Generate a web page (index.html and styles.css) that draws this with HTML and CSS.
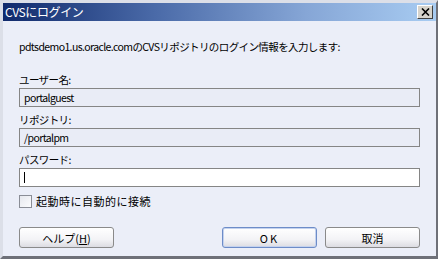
FILE: index.html
```html
<!DOCTYPE html>
<html lang="ja">
<head>
    <meta charset="UTF-8">
    <title>CVSにログイン</title>
    <link rel="stylesheet" href="styles.css">
</head>
<body>
    <div class="window">
        <div class="titlebar">
            <span class="title">CVSにログイン</span>
            <span class="close">
                <svg width="9" height="8" viewBox="0 0 9 8"><path d="M1 0.5 L8 7.5 M8 0.5 L1 7.5" stroke="#000" stroke-width="1.6"/></svg>
            </span>
        </div>
        <div class="content">
            <p class="intro">pdtsdemo1.us.oracle.comのCVSリポジトリのログイン情報を入力します:</p>

            <div class="group">
                <label class="label">ユーザー名:</label>
                <div class="field readonly">portalguest</div>
            </div>
            <div class="group">
                <label class="label">リポジトリ:</label>
                <div class="field readonly">/portalpm</div>
            </div>
            <div class="group">
                <label class="label">パスワード:</label>
                <div class="field edit"><span class="caret"></span></div>
            </div>

            <div class="check-row">
                <span class="checkbox"></span>
                <span class="check-label">起動時に自動的に接続</span>
            </div>

            <div class="buttons">
                <button class="btn">ヘルプ(<u>H</u>)</button>
                <div class="right">
                    <button class="btn default ok">OK</button>
                    <button class="btn">取消</button>
                </div>
            </div>
        </div>
    </div>
</body>
</html>
```

FILE: styles.css
```css
body {
    margin: 0;
    font-family: "Noto Sans CJK JP", "DejaVu Sans", sans-serif;
    font-size: 11px;
    color: #000;
}

.window {
    width: 438px;
    height: 259px;
    box-sizing: border-box;
    display: flex;
    flex-direction: column;
    border-top: 3px solid #dcdfe8;
    border-left: 3px solid #dcdfe8;
    border-right: 2px solid #6e7078;
    border-bottom: 3px solid #6e7078;
    background: #ebeef8;
}

.titlebar {
    height: 18px;
    display: flex;
    align-items: center;
    justify-content: space-between;
    padding: 0 3px 0 2px;
    background: linear-gradient(to right, #102a6c 0%, #4a6aa8 35%, #86a6d6 70%, #a8ccf2 100%);
}

.title {
    color: #fff;
    font-size: 12px;
    line-height: 18px;
    letter-spacing: -0.4px;
}

.close {
    width: 16px;
    height: 14px;
    box-sizing: border-box;
    display: flex;
    align-items: center;
    justify-content: center;
    background: #d6d3cc;
    border: 1px solid;
    border-color: #fff #404040 #404040 #fff;
}

.content {
    flex: 1;
    display: flex;
    flex-direction: column;
    padding: 19px 16px 8px 16px;
    font-size: 10.5px;
    letter-spacing: -0.6px;
}

.intro {
    margin: 0 0 19px;
    line-height: 14px;
}

.group {
    display: flex;
    flex-direction: column;
    gap: 1px;
    margin-bottom: 6px;
}

.label {
    line-height: 14px;
}

.field {
    height: 19px;
    box-sizing: border-box;
    border: 1px solid #858585;
    padding: 0 4px;
    line-height: 17px;
    display: flex;
    align-items: center;
}

.readonly {
    background: #e9ecf6;
}

.edit {
    background: #fff;
}

.caret {
    width: 1px;
    height: 11px;
    background: #000;
}

.check-row {
    display: flex;
    align-items: center;
    gap: 4px;
    margin-top: 1px;
    line-height: 14px;
}

.check-label {
    font-size: 11px;
    letter-spacing: 0.5px;
}

.checkbox {
    width: 13px;
    height: 13px;
    box-sizing: border-box;
    border: 1px solid #8a8d96;
    background: linear-gradient(135deg, #e6e8ee, #fbfbfd);
}

.buttons {
    margin-top: auto;
    display: flex;
    justify-content: space-between;
}

.right {
    display: flex;
    gap: 8px;
}

.btn {
    width: 95px;
    height: 21px;
    padding: 0;
    font-family: inherit;
    font-size: 11px;
    letter-spacing: 0;
    color: #000;
    border: 1px solid #8a8a8a;
    border-radius: 3px;
    background: linear-gradient(to bottom, #ffffff 0%, #f3f3f6 60%, #dcdce2 100%);
}

.ok {
    letter-spacing: 2px;
}

.default {
    border-color: #6d8cc8;
    box-shadow: inset 0 0 0 1px #c4d2ee;
}
```
